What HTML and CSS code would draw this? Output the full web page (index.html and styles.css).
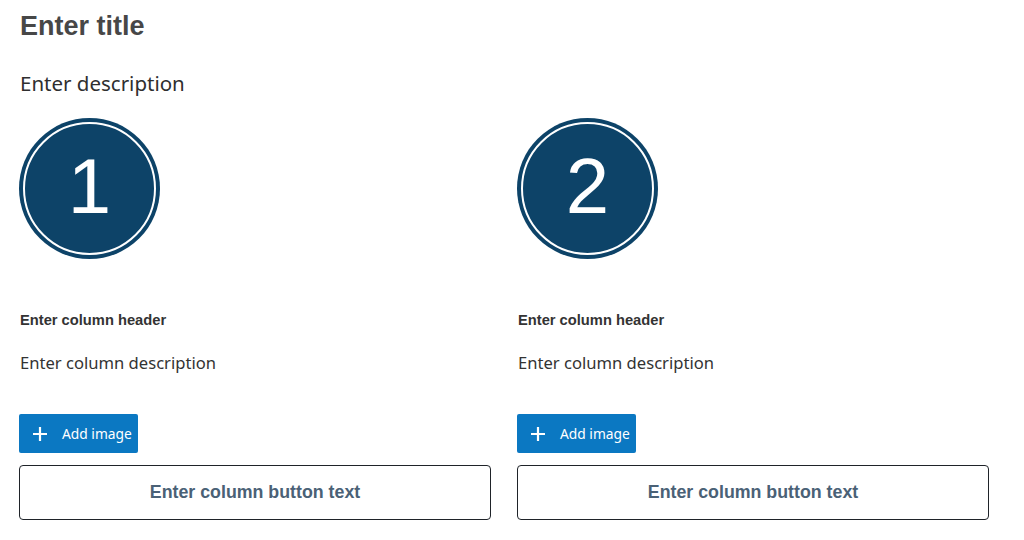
FILE: index.html
```html
<!DOCTYPE html>
<html>
<head>
<meta charset="utf-8">
<link rel="stylesheet" href="styles.css">
</head>
<body>
<main class="page">
  <h1 class="title">Enter title</h1>
  <p class="desc">Enter description</p>
  <div class="columns">
    <section class="col">
      <div class="badge"><span class="num">1</span></div>
      <h2 class="col-head">Enter column header</h2>
      <p class="col-desc">Enter column description</p>
      <button class="add-btn" type="button">
        <svg class="plus" viewBox="0 0 16 16" width="16" height="16"><path d="M8 1v14M1 8h14" stroke="#fff" stroke-width="2.2" fill="none"/></svg>
        <span>Add image</span>
      </button>
      <button class="col-btn" type="button">Enter column button text</button>
    </section>
    <section class="col">
      <div class="badge"><span class="num">2</span></div>
      <h2 class="col-head">Enter column header</h2>
      <p class="col-desc">Enter column description</p>
      <button class="add-btn" type="button">
        <svg class="plus" viewBox="0 0 16 16" width="16" height="16"><path d="M8 1v14M1 8h14" stroke="#fff" stroke-width="2.2" fill="none"/></svg>
        <span>Add image</span>
      </button>
      <button class="col-btn" type="button">Enter column button text</button>
    </section>
  </div>
</main>
</body>
</html>
```
FILE: styles.css
```css
* { box-sizing: border-box; }
html, body { margin: 0; padding: 0; background: #fff; }
body { font-family: "Noto Sans", "Open Sans", sans-serif; color: #333; }
.page { padding: 10px 35px 0 19px; width: 1024px; }
.title {
  font-family: "Liberation Sans", Arial, sans-serif;
  font-weight: bold;
  font-size: 27px;
  line-height: 32px;
  color: #474747;
  margin: 0 0 0 1px;
}
.desc {
  font-size: 20.5px;
  line-height: 28px;
  color: #2f2f2f;
  margin: 27px 0 0 1px;
}
.columns {
  display: grid;
  grid-template-columns: 472px 472px;
  column-gap: 26px;
  margin-top: 21px;
}
.col { display: flex; flex-direction: column; align-items: flex-start; }
.badge {
  width: 141px; height: 141px;
  border-radius: 50%;
  background: #0d4368;
  padding: 4px;
}
.num {
  display: flex; align-items: center; justify-content: center;
  width: 100%; height: 100%;
  border-radius: 50%;
  border: 2px solid #fff;
  font-family: "Liberation Sans", Arial, sans-serif;
  font-size: 78px;
  color: #fff;
  padding-bottom: 4px;
}
.col-head {
  font-family: "Liberation Sans", Arial, sans-serif;
  font-weight: bold;
  font-size: 14.7px;
  line-height: 18px;
  color: #333;
  margin: 52px 0 0 1px;
}
.col-desc {
  font-size: 16.6px;
  line-height: 24px;
  color: #333;
  margin: 22px 0 0 1px;
}
.add-btn {
  display: flex; align-items: center;
  height: 39px; width: 119px;
  margin-top: 39px;
  padding: 0 0 0 13px;
  background: #0b78c2;
  border: none;
  border-radius: 2px;
  color: #fff;
  font-family: "Noto Sans", "Open Sans", sans-serif;
  font-size: 13.8px;
  cursor: pointer;
}
.plus { margin-right: 14px; }
.col-btn {
  margin-top: 12px;
  width: 472px; height: 55px;
  background: #fff;
  border: 1px solid #1f2329;
  border-radius: 4px;
  font-family: "Liberation Sans", Arial, sans-serif;
  font-weight: bold;
  font-size: 17.8px;
  color: #4a6176;
  cursor: pointer;
}
```
